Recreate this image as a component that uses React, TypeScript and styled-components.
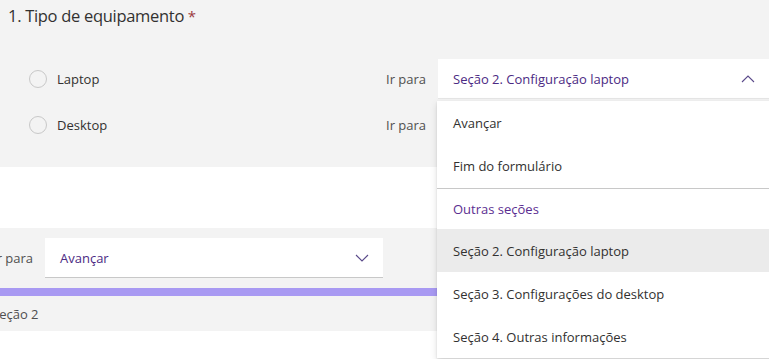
import styled, { createGlobalStyle } from "styled-components";

const GlobalStyle = createGlobalStyle`
  body {
    margin: 0;
    background: #ffffff;
    font-family: "Open Sans", "Noto Sans", sans-serif;
    color: #323130;
  }
`;

const Page = styled.div`
  position: relative;
  width: 769px;
  height: 359px;
  overflow: hidden;
`;

const Question = styled.div`
  background: #f3f3f3;
  height: 167px;
  box-sizing: border-box;
  padding-top: 2px;
`;

const Title = styled.div`
  font-size: 16.5px;
  line-height: 28px;
  padding-left: 8px;
  height: 57px;
  letter-spacing: -0.3px;
`;

const Required = styled.span`
  color: #9b3a3f;
  font-size: 15px;
`;

const Options = styled.div`
  display: flex;
  flex-direction: column;
  gap: 6px;
`;

const OptionRow = styled.div`
  display: flex;
  align-items: center;
  height: 40px;
  padding-left: 29px;
`;

const Choice = styled.div`
  display: flex;
  align-items: center;
  gap: 10px;
  width: 357px;
  font-size: 13px;
`;

const Radio = styled.span`
  width: 16px;
  height: 16px;
  border: 1px solid #c8c8c8;
  border-radius: 50%;
  background: #f3f3f3;
`;

const GoLabel = styled.span<{ $width?: number }>`
  width: ${({ $width }) => $width ?? 52}px;
  flex-shrink: 0;
  font-size: 13px;
  color: #4f4f4f;
  white-space: nowrap;
`;

const Select = styled.div<{ $width?: number; $open?: boolean }>`
  display: flex;
  align-items: center;
  justify-content: space-between;
  box-sizing: border-box;
  height: 40px;
  width: ${({ $width }) => ($width ? `${$width}px` : "auto")};
  flex: ${({ $width }) => ($width ? "none" : "1")};
  background: #ffffff;
  border-bottom: 1px solid ${({ $open }) => ($open ? "#e6e6e6" : "#c8c8c8")};
  padding: 0 14px 0 15px;
  font-size: 13px;
  color: #4b2a83;
`;

const Chevron = ({ up }: { up?: boolean }) => (
  <svg width="14" height="8" viewBox="0 0 14 8">
    <polyline
      points={up ? "1,7 7,1 13,7" : "1,1 7,7 13,1"}
      fill="none"
      stroke="#5a4a8a"
      strokeWidth="1.1"
    />
  </svg>
);

const Gap = styled.div`
  height: 61px;
`;

const Footer = styled.div`
  background: #f3f3f3;
  height: 103px;
  box-sizing: border-box;
  padding-top: 10px;
  display: flex;
  flex-direction: column;
`;

const FooterRow = styled.div`
  display: flex;
  align-items: center;
  height: 40px;
  margin-left: -7px;
`;

const ThemeBar = styled.div`
  margin-top: 10px;
  height: 8px;
  background: #a899f2;
`;

const SectionName = styled.div`
  flex: 1;
  display: flex;
  align-items: center;
  margin-left: -8px;
  font-size: 13px;
  color: #4f4f4f;
`;

const Menu = styled.div`
  position: absolute;
  left: 437px;
  top: 101px;
  width: 340px;
  height: 257px;
  background: #ffffff;
  box-shadow: 0 3px 7px rgba(0, 0, 0, 0.13), 0 0.6px 1.8px rgba(0, 0, 0, 0.11);
`;

const MenuItem = styled.div<{ $active?: boolean; $heading?: boolean }>`
  height: ${({ $heading }) => ($heading ? 40 : 43)}px;
  display: flex;
  align-items: center;
  padding-left: 16px;
  font-size: 13px;
  color: ${({ $heading }) => ($heading ? "#5b2e91" : "#323130")};
  background: ${({ $active }) => ($active ? "#ebebeb" : "transparent")};
`;

const Divider = styled.div`
  height: 1px;
  background: #c8c8c8;
  margin-top: 1px;
`;

export default function App() {
  return (
    <Page>
      <GlobalStyle />
      <Question>
        <Title>
          1. Tipo de equipamento<Required> *</Required>
        </Title>
        <Options>
          <OptionRow>
            <Choice>
              <Radio />
              Laptop
            </Choice>
            <GoLabel>Ir para</GoLabel>
            <Select $open>
              Seção 2. Configuração laptop
              <Chevron up />
            </Select>
          </OptionRow>
          <OptionRow>
            <Choice>
              <Radio />
              Desktop
            </Choice>
            <GoLabel>Ir para</GoLabel>
            <Select>
              Avançar
              <Chevron />
            </Select>
          </OptionRow>
        </Options>
      </Question>
      <Gap />
      <Footer>
        <FooterRow>
          <GoLabel $width={52}>Ir para</GoLabel>
          <Select $width={338}>
            Avançar
            <Chevron />
          </Select>
        </FooterRow>
        <ThemeBar />
        <SectionName>Seção 2</SectionName>
      </Footer>
      <Menu>
        <MenuItem>Avançar</MenuItem>
        <MenuItem>Fim do formulário</MenuItem>
        <Divider />
        <MenuItem $heading>Outras seções</MenuItem>
        <MenuItem $active>Seção 2. Configuração laptop</MenuItem>
        <MenuItem>Seção 3. Configurações do desktop</MenuItem>
        <MenuItem>Seção 4. Outras informações</MenuItem>
      </Menu>
    </Page>
  );
}
